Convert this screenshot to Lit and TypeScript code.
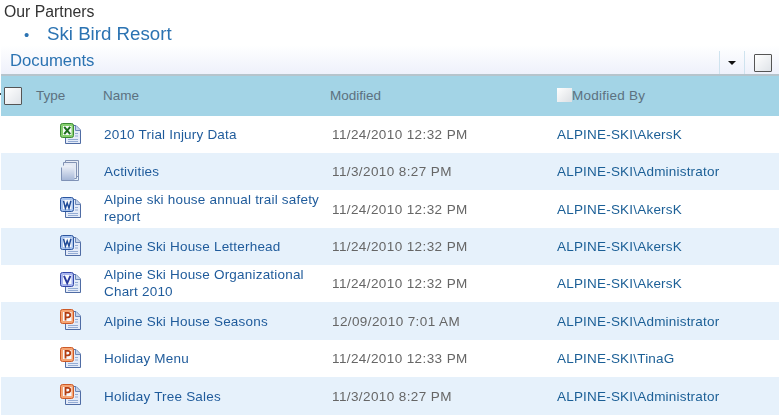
import { LitElement, html, css, svg } from "lit";
import { customElement } from "lit/decorators.js";

type Kind = "x" | "f" | "w" | "v" | "p";
const rows: { k: Kind; name: string[]; mod: string; by: string; h: number }[] = [
  { k: "x", name: ["2010 Trial Injury Data"], mod: "11/24/2010 12:32 PM", by: "ALPINE-SKI\\AkersK", h: 37 },
  { k: "f", name: ["Activities"], mod: "11/3/2010 8:27 PM", by: "ALPINE-SKI\\Administrator", h: 37 },
  { k: "w", name: ["Alpine ski house annual trail safety", "report"], mod: "11/24/2010 12:32 PM", by: "ALPINE-SKI\\AkersK", h: 38 },
  { k: "w", name: ["Alpine Ski House Letterhead"], mod: "11/24/2010 12:32 PM", by: "ALPINE-SKI\\AkersK", h: 37 },
  { k: "v", name: ["Alpine Ski House Organizational", "Chart 2010"], mod: "11/24/2010 12:32 PM", by: "ALPINE-SKI\\AkersK", h: 37 },
  { k: "p", name: ["Alpine Ski House Seasons"], mod: "12/09/2010 7:01 AM", by: "ALPINE-SKI\\Administrator", h: 38 },
  { k: "p", name: ["Holiday Menu"], mod: "11/24/2010 12:33 PM", by: "ALPINE-SKI\\TinaG", h: 37 },
  { k: "p", name: ["Holiday Tree Sales"], mod: "11/3/2010 8:27 PM", by: "ALPINE-SKI\\Administrator", h: 38 },
];

const badge: Record<string, [string, string, string]> = {
  x: ["#86cf6e", "#3b8a35", "#1c6b1c"],
  w: ["#a9c4ee", "#2a559f", "#1f4a97"],
  v: ["#a8b4ee", "#3548a8", "#2a3a9c"],
  p: ["#f6a574", "#cc5a28", "#b23c10"],
};

function icon(k: Kind) {
  if (k === "f") {
    return html`<svg width="21" height="21" viewBox="0 0 21 21">
      <defs><linearGradient id="fg" x1="0" y1="0" x2="0" y2="1"><stop offset="0" stop-color="#eef2f9"/><stop offset="1" stop-color="#a3b5d6"/></linearGradient></defs>
      <path d="M5.5 .5H18.5V16.5H5.5Z" fill="#e8edf6" stroke="#8293b4"/>
      <path d="M3.5 2.5H16.5V18.5H3.5Z" fill="#e3e9f4" stroke="#8293b4"/>
      <path d="M1.5 7.5L3.5 5.5H11L14.5 8.5V20.5H1.5Z" fill="url(#fg)"/>
      <path d="M1.5 7.5V20.5H18.5V14" fill="none" stroke="#7f92b6"/>
    </svg>`;
  }
  const [bg, edge, ink] = badge[k];
  return html`<svg width="21" height="21" viewBox="0 0 21 21">
    <path d="M5.5 2.5H16L20.5 7V20.5H5.5Z" fill="#e4ebf8" stroke="#4f6ca4"/>
    <path d="M15.5 2.5V7.5H20.5" fill="#c3d3ec" stroke="#6d88b8"/>
    ${svg`<path d="M8 16.5H18M8 18.5H18M15 10.5H18M15 13H18" stroke="#94acd4" stroke-width="1"/>`}
    <rect x=".5" y=".5" width="13" height="14" rx="2" fill=${bg} stroke=${edge}/>
    <rect x="3" y="3" width="8.5" height="9" fill="#f8fafc"/>
    ${k === "x"
      ? svg`<path d="M4.2 3.8L10.2 11.2M10.2 3.8L4.2 11.2" stroke=${ink} stroke-width="2"/>`
      : k === "w"
      ? svg`<path d="M3.5 3.8L5.4 11.2L7.2 6L9 11.2L10.9 3.8" fill="none" stroke=${ink} stroke-width="1.5"/>`
      : k === "v"
      ? svg`<path d="M4 3.8L7.2 11.2L10.4 3.8" fill="none" stroke=${ink} stroke-width="1.9"/>`
      : svg`<path d="M5.5 11.5V3.8H8a2.1 2.1 0 0 1 0 4.5H5.5" fill="none" stroke=${ink} stroke-width="1.8"/>`}
  </svg>`;
}

@customElement("app-root")
export class AppRoot extends LitElement {
  static styles = css`
    :host { display: block; width: 784px; height: 419px; overflow: hidden; background: #fff;
      font-family: "Liberation Sans", Arial, sans-serif; font-size: 13.5px; color: #2a2a2a; }
    .page { filter: blur(0.35px); }
    .partners { padding: 3px 0 0 4px; font-size: 15.8px; line-height: 18px; color: #333; }
    .list { display: flex; align-items: center; height: 22px; margin-top: 2px; padding-left: 24px; font-size: 18.7px; color: #2b73b2; }
    .bullet { width: 23px; font-size: 15px; }
    .bar { display: flex; width: 778px; height: 31px; margin-left: 1px; box-sizing: border-box;
      background: linear-gradient(#fff, #eef1fb); border-bottom: 2px solid #b6c4cc; }
    .bar-title { flex: 1; padding: 6px 0 0 9px; font-size: 16.7px; line-height: 20px; color: #2b73b2; }
    .bar-tools { display: flex; align-items: flex-end; }
    .drop { display: flex; align-items: center; justify-content: center; width: 26px; height: 23px;
      border-left: 1px solid #cfe3ef; border-right: 1px solid #cfe3ef; box-sizing: border-box; }
    .arrow { width: 0; height: 0; border: 4px solid transparent; border-top: 4px solid #111; border-bottom: 0; }
    .box { box-sizing: border-box; width: 18px; height: 18px; border: 1.5px solid #555; border-radius: 1px;
      background: linear-gradient(135deg, #fff, #dfe3e8); }
    .bar-tools .box { margin: 0 7px 2px 9px; }
    .head, .row { display: grid; grid-template-columns: 35px 67px 227px 227px 222px; width: 778px; margin-left: 1px; align-items: center; }
    .head { position: relative; height: 40px; background: #a3d4e6; color: #5c7180; }
    .head::before { content: ""; position: absolute; left: -1px; top: 17px; width: 1px; height: 2px; background: #444; }
    .head .box { margin: 0 0 1px 3px; }
    .head-label { padding-bottom: 2px; }
    .by-label { display: flex; align-items: center; letter-spacing: .25px; padding-bottom: 2px; }
    .mini { width: 15px; height: 14px; background: linear-gradient(135deg, #fff, #dcdfe3); }
    .row { color: #1f5b9b; }
    .row.alt { background: #e6f1fb; }
    .type { display: flex; padding: 0 0 3px 24px; }
    .cell-name { padding-left: 1px; white-space: nowrap; letter-spacing: .2px; }
    .cell-name.two { padding-bottom: 2px; }
    .cell-name div { line-height: 17px; }
    .mod { color: #666; padding-left: 2px; letter-spacing: .4px; }
    .by { letter-spacing: .2px; color: #1b5f96; }
  `;

  render() {
    return html`<div class="page">
      <div class="partners">Our Partners</div>
      <div class="list"><span class="bullet">•</span><span>Ski Bird Resort</span></div>
      <div class="bar">
        <div class="bar-title">Documents</div>
        <div class="bar-tools">
          <div class="drop"><div class="arrow"></div></div>
          <div class="box"></div>
        </div>
      </div>
      <div class="head">
        <div><div class="box"></div></div>
        <div class="head-label">Type</div>
        <div class="head-label">Name</div>
        <div class="head-label">Modified</div>
        <div class="by-label"><div class="mini"></div>Modified By</div>
      </div>
      ${rows.map(
        (r, i) => html`<div class="row ${i % 2 ? "alt" : ""}" style="height:${r.h}px">
          <div></div>
          <div class="type">${icon(r.k)}</div>
          <div class="cell-name ${r.name.length > 1 ? "two" : ""}">${r.name.map((n) => html`<div>${n}</div>`)}</div>
          <div class="mod">${r.mod}</div>
          <div class="by">${r.by}</div>
        </div>`
      )}
    </div>`;
  }
}
